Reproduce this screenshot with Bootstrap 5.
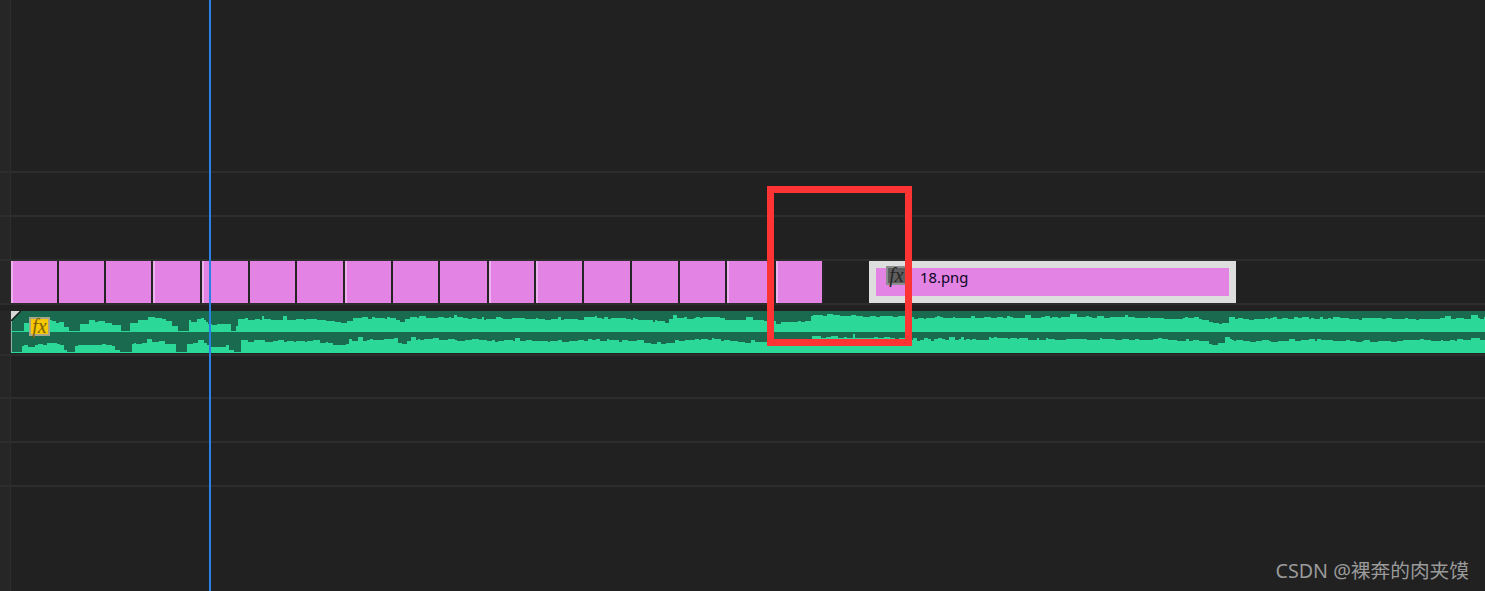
<!DOCTYPE html>
<html lang="zh">
<head>
    <meta charset="UTF-8">
    <meta name="viewport" content="width=device-width, initial-scale=1.0">
    <title>Timeline</title>
    <link href="https://cdn.jsdelivr.net/npm/bootstrap@5.3.0/dist/css/bootstrap.min.css" rel="stylesheet">
    <style>
        body {
            background-color: #212121;
            overflow: hidden;
            font-family: "Noto Sans", "Noto Sans CJK SC", sans-serif;
        }

        .seq-row {
            border-bottom: 2px solid #2d2d2d;
        }

        .seq-h171 { height: 173px; }
        .seq-h42 { height: 44px; }
        .seq-h41 { height: 43px; }
        .seq-h49 { height: 51px; }
        .seq-rest { height: 104px; border-bottom: 0; }

        .seq-gutter {
            width: 11px;
            flex: none;
            background-color: #262626;
            border-right: 1px solid #2e2e2e;
        }

        /* clips */
        .pink-clip {
            height: 42px;
            flex: none;
            background-color: #e383e3;
            border-right: 2px solid #242424;
        }

        .pink-clip.lit {
            border-left: 2px solid #eeb2ee;
        }

        .clip-gap {
            width: 45px;
            flex: none;
        }

        .still-clip {
            width: 367px;
            height: 42px;
            flex: none;
            background-color: #dedede;
            padding: 7px;
        }

        .still-inner {
            height: 28px;
            background-color: #e383e3;
            color: #0c0726;
            font-size: 14.8px;
            line-height: 18px;
            padding-left: 10px;
        }

        .fx-tag {
            width: 21px;
            height: 19px;
            margin-top: -2px;
            margin-right: 13px;
            flex: none;
            font-family: "Liberation Serif", serif;
            font-style: italic;
            font-size: 20px;
            line-height: 14px;
            text-align: center;
            border: 2px solid #8c8c8c;
            background-color: #5e5e5e;
            color: #262626;
        }

        .fx-yellow {
            left: 18px;
            top: 6px;
            border-color: #a5a58c;
            background-color: #f7c800;
            color: #7d6208;
            margin: 0;
        }

        /* audio */
        .audio-row {
            padding-top: 6px;
        }

        .audio-clip {
            height: 42px;
            background-color: #196a4e;
            box-shadow: inset 1px 0 0 #8db5a5;
        }

        .audio-clip svg {
            display: block;
        }

        .corner-flag {
            left: 0;
            top: 0;
        }

        /* overlays */
        .play-line {
            left: 209px;
            top: 0;
            bottom: 0;
            width: 2px;
            background-color: #2b80e6;
        }

        .red-box {
            left: 767px;
            top: 186px;
            width: 145px;
            height: 160px;
            border: 7px solid #fe3434;
        }

        .csdn-mark {
            right: 16px;
            bottom: 6px;
            color: #9a9a9a;
            font-size: 19.7px;
            line-height: 28px;
        }
    </style>
</head>
<body>

    <div class="position-relative overflow-hidden">
        <div class="seq-row seq-h171 d-flex"><div class="seq-gutter"></div></div>
        <div class="seq-row seq-h42 d-flex"><div class="seq-gutter"></div></div>
        <div class="seq-row seq-h42 d-flex"><div class="seq-gutter"></div></div>

        <div class="seq-row seq-h42 d-flex">
            <div class="seq-gutter"></div>
            <div class="d-flex" id="pink-clips"></div>
            <div class="clip-gap"></div>
            <div class="still-clip">
                <div class="still-inner d-flex">
                    <div class="fx-tag">fx</div>
                    <span>18.png</span>
                </div>
            </div>
        </div>

        <div class="seq-row seq-h49 audio-row d-flex">
            <div class="seq-gutter"></div>
            <div class="audio-clip flex-grow-1 position-relative overflow-hidden">
                <svg width="1474" height="42" viewBox="11 311 1474 42">
                    <path id="wave-top" fill="#2bd898"></path>
                    <path id="wave-bottom" fill="#2bd898"></path>
                </svg>
                <svg class="corner-flag position-absolute" width="10" height="10" viewBox="0 0 10 10">
                    <polygon points="0,0 9,0 0,9" fill="#d6d6d6"></polygon>
                    <path d="M10 0 L0 10" stroke="#1d1d1d" stroke-width="1.5"></path>
                </svg>
                <div class="fx-tag fx-yellow position-absolute">fx</div>
            </div>
        </div>

        <div class="seq-row seq-h41 d-flex"><div class="seq-gutter"></div></div>
        <div class="seq-row seq-h42 d-flex"><div class="seq-gutter"></div></div>
        <div class="seq-row seq-h42 d-flex"><div class="seq-gutter"></div></div>
        <div class="seq-row seq-rest d-flex"><div class="seq-gutter"></div></div>

        <div class="play-line position-absolute"></div>
        <div class="red-box position-absolute"></div>
        <div class="csdn-mark position-absolute text-nowrap">CSDN @裸奔的肉夹馍</div>
    </div>

    <script>
        // clip start positions read off the timeline
        const starts = [11, 59, 106, 153, 202, 250, 297, 345, 393, 440, 489, 536, 584, 632, 680, 727, 776, 824];
        const lit = [0, 3, 4, 7, 10, 11, 15, 16];
        const box = document.getElementById("pink-clips");
        for (let i = 0; i < starts.length - 1; i++) {
            const clip = document.createElement("div");
            clip.className = "pink-clip" + (lit.includes(i) ? " lit" : "");
            clip.style.width = (starts[i + 1] - starts[i]) + "px";
            box.appendChild(clip);
        }

        // waveform envelope: [x, height]
        const knots = [[11,1],[19.9,1],[20,8],[28,8],[50,11],[60,9],[66,3],[67,1],[74,1],[74.1,8],[90,10],[100,10],[110,8],[119,3],[120,1],[128,1],[129,9],[145,12],[158,13],[170,10],[175,2],[176,1],[185,1],[186,9],[200,13],[208,8],[228,8],[230,1],[235,1],[238,13],[320,12.5],[345,8],[348,14],[395,14],[400,9],[405,14],[425,15],[460,14],[500,13],[510,14],[560,12.5],[590,14],[640,12.5],[665,10],[672,14],[715,15],[725,12.5],[760,12],[775,9],[808,11],[812,17],[905,16],[912,14],[1000,15],[1200,14],[1210,9],[1222,8],[1222.1,17],[1240,13],[1300,14],[1380,13],[1485,14]];

        function envelope(x) {
            for (let i = 1; i < knots.length; i++) {
                if (x <= knots[i][0]) {
                    const a = knots[i - 1], b = knots[i];
                    return a[1] + (b[1] - a[1]) * (x - a[0]) / (b[0] - a[0]);
                }
            }
            return 13;
        }

        function makeWave(base, seed, drop) {
            let s = seed;
            const rnd = () => (s = (s * 16807) % 2147483647) / 2147483647;
            let d = "M11 " + base;
            let x = 11;
            while (x < 1485) {
                const step = 2 + Math.floor(rnd() * 6);
                let h = envelope(x);
                if (h > 3) {
                    h += (rnd() - 0.5) * 2.2 - drop;
                    if (rnd() < 0.08) h += 2;
                }
                const y = Math.round(base - Math.max(h, 1));
                d += " L" + x + " " + y + " L" + (x + step) + " " + y;
                x += step;
            }
            return d + " L1485 " + base + " Z";
        }

        document.getElementById("wave-top").setAttribute("d", makeWave(332, 4711, 0));
        document.getElementById("wave-bottom").setAttribute("d", makeWave(353, 9127, 1));
    </script>
    <script src="https://cdn.jsdelivr.net/npm/bootstrap@5.3.0/dist/js/bootstrap.bundle.min.js"></script>
</body>
</html>
